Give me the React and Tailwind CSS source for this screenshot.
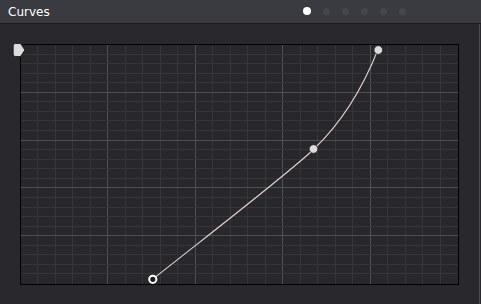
import React from "react";

const W = 437;
const H = 239;

function Grid() {
  const lines = [];
  for (let i = 1; i < 25; i++) {
    const x = Math.round((i * W) / 25) - 1 + 0.5;
    const major = i % 5 === 0;
    lines.push(
      <line key={"v" + i} x1={x} y1={0} x2={x} y2={H} stroke={major ? "#505157" : "#35353b"} strokeWidth="1" />
    );
  }
  for (let j = 1; j < 25; j++) {
    const y = Math.round((j * H) / 25) - 1 + 0.5;
    const major = j % 5 === 0;
    lines.push(
      <line key={"h" + j} x1={0} y1={y} x2={W} y2={y} stroke={major ? "#4a5351" : "#35353b"} strokeWidth="1" />
    );
  }
  return <g>{lines}</g>;
}

export default function App() {
  const dots = [0, 1, 2, 3, 4, 5];
  return (
    <div className="w-[481px] h-[304px] flex flex-col bg-[#28282d] overflow-hidden" style={{ fontFamily: '"DejaVu Sans", sans-serif' }}>
      <div className="h-[23px] shrink-0 bg-[#3a3b40] flex items-center pl-2 relative">
        <span className="text-white text-[12px] leading-none">Curves</span>
        <div className="absolute left-[303px] top-[7px] flex items-center gap-[12px]">
          {dots.map((d) => (
            <div
              key={d}
              className={
                d === 0
                  ? "w-[8px] h-[8px] rounded-full bg-white"
                  : "w-[7px] h-[7px] rounded-full bg-[#46474c]"
              }
            />
          ))}
        </div>
      </div>
      <div className="h-px shrink-0 bg-[#1c1c20]" />
      <div className="flex-1 flex border-r border-[#4a4a50] mr-[1px]">
        <div className="ml-[20px] mt-[20px] w-[439px] h-[241px] border border-black bg-[#27272c]">
          <svg width={W} height={H} viewBox={`0 0 ${W} ${H}`} className="block overflow-visible">
            <Grid />
            <path
              d="M132,234 C199,181 269,127 293,104 C319,79 341,45 357,4.5"
              fill="none"
              stroke="#e6cfcf"
              strokeWidth="1.1"
            />
            <circle cx="131.8" cy="234.3" r="3.6" fill="#1e1e22" stroke="#ffffff" strokeWidth="2" />
            <circle cx="292.5" cy="104" r="4.3" fill="#dcdcdc" stroke="#2a2a2e" strokeWidth="0.8" />
            <circle cx="357.3" cy="5" r="4.3" fill="#dcdcdc" stroke="#2a2a2e" strokeWidth="0.8" />
            <path
              d="M-5.5,-1.5 L-0.5,-1.5 L3.8,5 L-0.5,11.5 L-5.5,11.5 Q-7.8,11.5 -7.8,9.2 L-7.8,0.8 Q-7.8,-1.5 -5.5,-1.5 Z"
              fill="#dcdcdc"
              stroke="#111"
              strokeWidth="0.8"
            />
          </svg>
        </div>
      </div>
    </div>
  );
}
